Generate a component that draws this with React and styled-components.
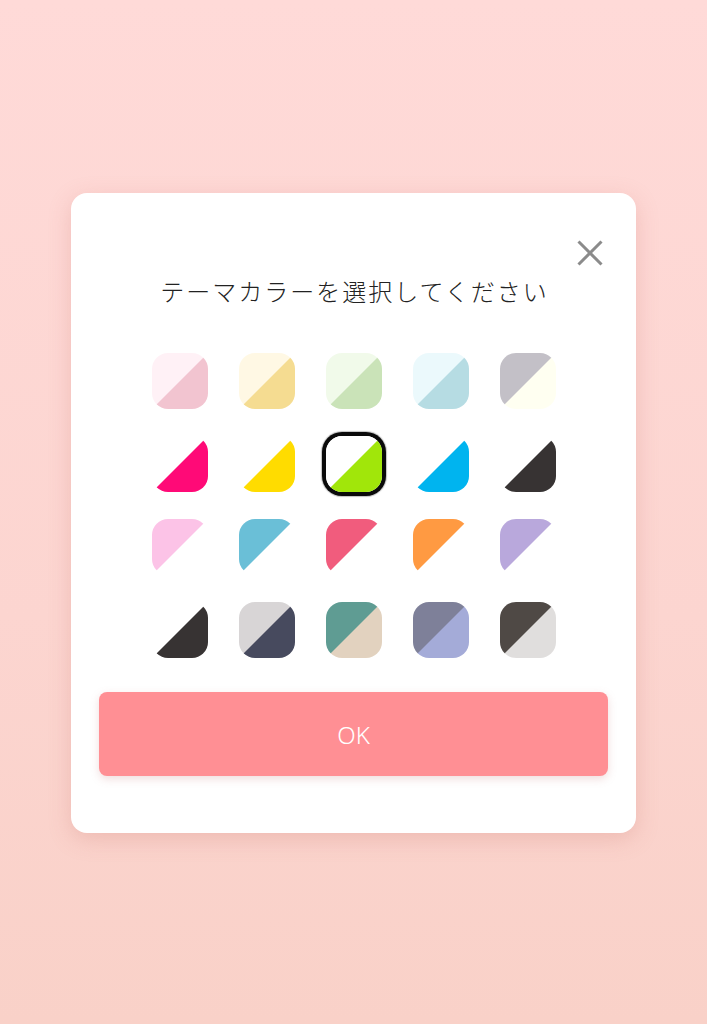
import styled, { createGlobalStyle } from "styled-components";

const GlobalStyle = createGlobalStyle`
  html, body {
    margin: 0;
    padding: 0;
  }
  body {
    font-family: "Noto Sans CJK JP", "Noto Sans", sans-serif;
  }
`;

const swatches = [
  ["#FFF1F6", "#F2C4D0"],
  ["#FFF8E4", "#F5DC91"],
  ["#F1FAEA", "#CAE3B8"],
  ["#EBF9FC", "#B6DCE3"],
  ["#C3C0C7", "#FFFFF1"],
  ["#FFFFFF", "#FF0A77"],
  ["#FFFFFF", "#FFDC00"],
  ["#FFFFFF", "#A1E60A"],
  ["#FFFFFF", "#00B4EF"],
  ["#FFFFFF", "#373333"],
  ["#FCC3E7", "#FFFFFF"],
  ["#6ABFD7", "#FFFFFF"],
  ["#F15C7D", "#FFFFFF"],
  ["#FF9A42", "#FFFFFF"],
  ["#B9A8DC", "#FFFFFF"],
  ["#FFFFFF", "#373333"],
  ["#D8D5D6", "#474A5E"],
  ["#5F9C93", "#E2D2BF"],
  ["#7E8099", "#A4ABD8"],
  ["#4F4945", "#E0DEDD"],
];

const SELECTED = 7;

function App() {
  return (
    <>
      <GlobalStyle />
      <Page>
        <Dialog>
          <CloseButton aria-label="close">
            <svg width="26" height="26" viewBox="0 0 26 26">
              <path d="M1.5 1.5 L24.5 24.5 M24.5 1.5 L1.5 24.5" stroke="#8b8b8b" strokeWidth="3" fill="none" />
            </svg>
          </CloseButton>
          <Title>テーマカラーを選択してください</Title>
          <Grid>
            {swatches.map(([a, b], i) => (
              <Swatch key={i} $a={a} $b={b} $selected={i === SELECTED} />
            ))}
          </Grid>
          <OkButton>OK</OkButton>
        </Dialog>
      </Page>
    </>
  );
}

const Page = styled.div`
  min-height: 1024px;
  background: linear-gradient(180deg, #ffdad8 0%, #fcd5d0 60%, #f9d1c8 100%);
  display: flex;
  justify-content: center;
  align-items: flex-start;
  padding-top: 193px;
  box-sizing: border-box;
`;

const Dialog = styled.div`
  position: relative;
  width: 565px;
  box-sizing: border-box;
  background: #ffffff;
  border-radius: 16px;
  box-shadow: 0 6px 22px rgba(210, 130, 120, 0.3);
  padding: 81px 28px 57px;
  display: flex;
  flex-direction: column;
  align-items: center;
`;

const CloseButton = styled.button`
  position: absolute;
  top: 46px;
  right: 32px;
  width: 28px;
  height: 28px;
  padding: 1px;
  border: none;
  background: transparent;
  display: flex;
  align-items: center;
  justify-content: center;
  cursor: pointer;
`;

const Title = styled.h2`
  margin: 0;
  font-size: 24px;
  line-height: 34px;
  font-weight: 300;
  letter-spacing: 2px;
  padding-left: 2px;
  color: #222222;
  text-align: center;
`;

const Grid = styled.div`
  margin-top: 45px;
  display: grid;
  grid-template-columns: repeat(5, 56px);
  grid-auto-rows: 56px;
  column-gap: 31px;
  row-gap: 27px;
`;

const Swatch = styled.div`
  width: 56px;
  height: 56px;
  border-radius: 16px;
  background: linear-gradient(135deg, ${(p) => p.$a} 49.6%, ${(p) => p.$b} 50.4%);
  box-shadow: ${(p) => (p.$selected ? "0 0 0 4px #0a0a0a, 0 0 1px 5px rgba(0,0,0,0.25)" : "none")};
`;

const OkButton = styled.button`
  margin-top: 34px;
  width: 100%;
  height: 84px;
  border: none;
  border-radius: 8px;
  background: #ff8f94;
  color: #ffffff;
  font-family: "Noto Sans", "Liberation Sans", sans-serif;
  font-size: 24px;
  font-weight: 300;
  box-shadow: 0 3px 8px rgba(200, 120, 120, 0.25);
  cursor: pointer;
`;

export default App;
